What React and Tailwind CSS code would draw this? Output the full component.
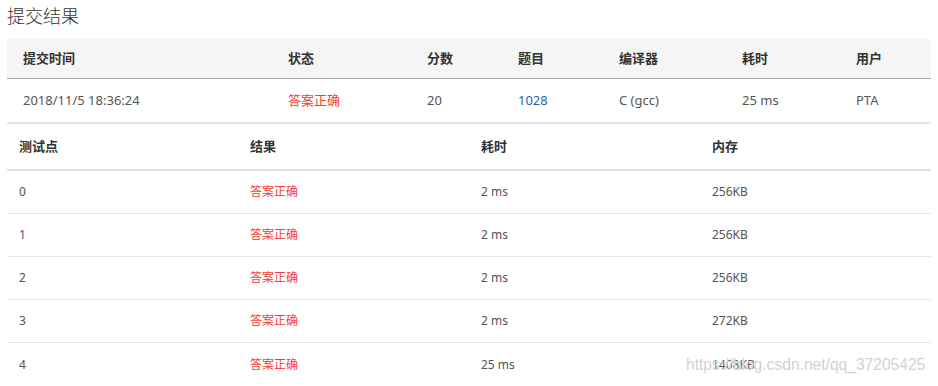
import React from "react";

const top = [
  { t: "2018/11/5 18:36:24" },
  { t: "答案正确", c: "text-[#f63b3b]" },
  { t: "20" },
  { t: "1028", c: "text-[#2862ae]" },
  { t: "C (gcc)" },
  { t: "25 ms" },
  { t: "PTA" },
];
const heads = ["提交时间", "状态", "分数", "题目", "编译器", "耗时", "用户"];
const rows = [
  ["0", "2 ms", "256KB"],
  ["1", "2 ms", "256KB"],
  ["2", "2 ms", "256KB"],
  ["3", "2 ms", "272KB"],
  ["4", "25 ms", "1408KB"],
];

export default function App() {
  return (
    <div className="relative w-[938px] h-[386px] overflow-hidden bg-white font-['Noto_Sans','Noto_Sans_CJK_SC',sans-serif]">
      <div className="h-[39px] pl-[7px] pt-[4px] text-[18px] leading-[24px] text-[#333] font-light">
        提交结果
      </div>
      <div className="mx-[7px]">
        <div className="grid grid-cols-[265px_139px_91px_101px_123px_114px_93px] h-[40px] items-center bg-[#f5f5f5] border-b border-[#adadad]">
          {heads.map((h) => (
            <div key={h} className="pl-4 text-[13px] font-semibold text-[#333]">
              {h}
            </div>
          ))}
        </div>
        <div className="grid grid-cols-[265px_139px_91px_101px_123px_114px_93px] h-[43px] items-center">
          {top.map((c, i) => (
            <div key={i} className={"pl-4 text-[13px] text-[#555] " + (c.c || "")}>
              {c.t}
            </div>
          ))}
        </div>
        <div className="h-[2px] bg-[#e6e6e6]" />
        <div className="grid grid-cols-4 h-[47px] items-center border-b-2 border-[#dfe2e7]">
          {["测试点", "结果", "耗时", "内存"].map((h) => (
            <div key={h} className="px-3 text-[13px] font-semibold text-[#333]">
              {h}
            </div>
          ))}
        </div>
        {rows.map((r, i) => (
          <div
            key={r[0]}
            className={
              "grid grid-cols-4 h-[43px] items-center " +
              (i < rows.length - 1 ? "border-b border-[#e6e7ea]" : "")
            }
          >
            <div className="px-3 text-[12px] text-[#555]">{r[0]}</div>
            <div className="px-3 text-[12px] text-[#f63b3b]">答案正确</div>
            <div className="px-3 text-[12px] text-[#555]">{r[1]}</div>
            <div className="px-3 text-[12px] text-[#555]">{r[2]}</div>
          </div>
        ))}
      </div>
      <div className="absolute left-[686px] top-[355px] text-[15.6px] leading-[20px] text-[#d2d2d2] font-['Liberation_Sans',Arial,sans-serif] [text-shadow:0_0_1px_rgba(255,255,255,0.8)]">
        https://blog.csdn.net/qq_37205425
      </div>
    </div>
  );
}
